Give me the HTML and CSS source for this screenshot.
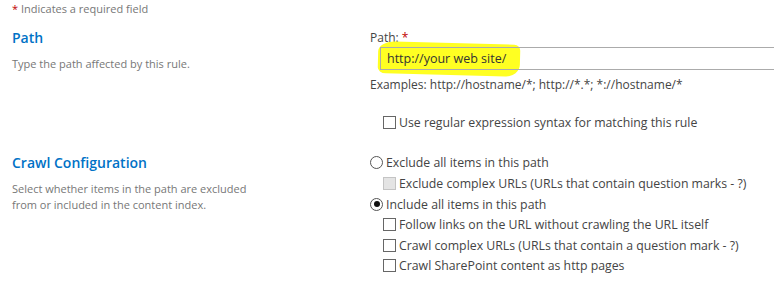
FILE: index.html
```html
<!DOCTYPE html>
<html lang="en">
<head>
  <meta charset="UTF-8">
  <title>Crawl Rule</title>
  <link rel="stylesheet" href="styles.css">
</head>
<body>
  <div class="required-note"><span class="star">*</span> Indicates a required field</div>

  <!-- Path section -->
  <div class="section path-section">
    <div class="section-info">
      <h3>Path</h3>
      <p>Type the path affected by this rule.</p>
    </div>
    <div class="section-body">
      <label class="field-label">Path: <span class="star">*</span></label>
      <div class="input-wrap">
        <span class="marker"></span>
        <input type="text" class="path-input" value="http://your web site/">
      </div>
      <div class="examples">Examples: http://hostname/*; http://*.*; *://hostname/*</div>
      <div class="option indent regex">
        <span class="box"></span>Use regular expression syntax for matching this rule
      </div>
    </div>
  </div>

  <!-- Crawl configuration section -->
  <div class="section crawl-section">
    <div class="section-info">
      <h3>Crawl Configuration</h3>
      <p>Select whether items in the path are excluded<br>from or included in the content index.</p>
    </div>
    <div class="section-body">
      <div class="option"><span class="radio"></span>Exclude all items in this path</div>
      <div class="option indent"><span class="box disabled"></span>Exclude complex URLs (URLs that contain question marks - ?)</div>
      <div class="option"><span class="radio checked"></span>Include all items in this path</div>
      <div class="option indent"><span class="box"></span>Follow links on the URL without crawling the URL itself</div>
      <div class="option indent"><span class="box"></span>Crawl complex URLs (URLs that contain a question mark - ?)</div>
      <div class="option indent"><span class="box"></span>Crawl SharePoint content as http pages</div>
    </div>
  </div>
</body>
</html>
```

FILE: styles.css
```css
/* Page basics */
body {
  margin: 0;
  background: #fff;
  font-family: "Open Sans", "Noto Sans", sans-serif;
  color: #444;
  overflow: hidden;
}

.star {
  color: #bf0000;
}

/* Required note at the top */
.required-note {
  font-size: 11px;
  color: #777;
  padding: 1px 0 0 12px;
  height: 20px;
}

/* Two column sections */
.section {
  display: grid;
  grid-template-columns: 358px 1fr;
  padding-left: 12px;
}

.section-info h3 {
  margin: 0;
  font-size: 14px;
  font-weight: 600;
  color: #0072c6;
  line-height: 20px;
}

.section-info p {
  margin: 8px 0 0;
  font-size: 11px;
  color: #777;
  line-height: 16px;
}

.path-section {
  margin-top: 7px;
}

.crawl-section {
  margin-top: 20px;
}

/* Path field */
.field-label {
  display: block;
  font-size: 12px;
  line-height: 16px;
  margin-top: 2px;
}

.input-wrap {
  position: relative;
  margin: 1px 0 0 10px;
}

.path-input {
  display: block;
  width: 420px;
  height: 23px;
  box-sizing: border-box;
  border: 1px solid #ababab;
  border-right: none;
  background: transparent;
  padding: 0 0 0 6px;
  font-family: inherit;
  font-size: 12.5px;
  color: #333;
  position: relative;
}

/* freehand yellow highlighter stroke */
.marker {
  position: absolute;
  left: -2px;
  top: -4px;
  width: 142px;
  height: 32px;
  background: #ffff22;
  border-radius: 16px 6px 14px 8px / 10px 6px 12px 6px;
  transform: rotate(1.5deg);
}

.examples {
  font-size: 12px;
  line-height: 16px;
  margin-top: 7px;
}

/* Radio and checkbox rows */
.option {
  display: flex;
  align-items: center;
  font-size: 12.3px;
  height: 20.6px;
}

.option.indent {
  padding-left: 13px;
}

.regex {
  margin-top: 19px;
}

.box {
  width: 11px;
  height: 11px;
  border: 1px solid #666;
  margin-right: 3px;
  flex: none;
}

.box.disabled {
  background: #e4e4e4;
  border-color: #c4c4c4;
}

.radio {
  width: 11px;
  height: 11px;
  border: 1px solid #555;
  border-radius: 50%;
  margin-right: 3px;
  flex: none;
  position: relative;
}

.radio.checked::after {
  content: "";
  position: absolute;
  left: 2.5px;
  top: 2.5px;
  width: 6px;
  height: 6px;
  border-radius: 50%;
  background: #111;
}
```
